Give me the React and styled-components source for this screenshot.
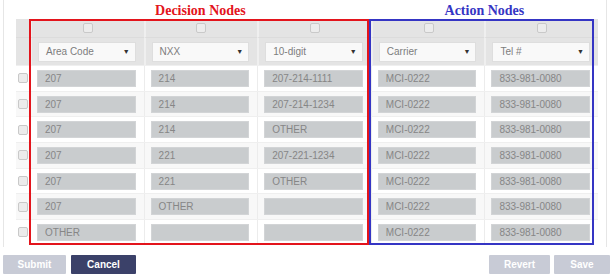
import React from "react";
import styled, { createGlobalStyle } from "styled-components";

const Global = createGlobalStyle`
  html, body { margin: 0; padding: 0; background: #fff; }
  body { font-family: "Liberation Sans", Arial, sans-serif; }
`;

const Card = styled.div`
  margin-left: 3px;
  width: 604px;
  box-sizing: border-box;
  border-left: 1px solid #e6e6e6;
  border-right: 1px solid #e6e6e6;
  padding: 0 8px 2px 12px;
`;

const Board = styled.div`
  position: relative;
  width: 582px;
`;

const Grid = styled.div`
  display: grid;
  grid-template-columns: 14px repeat(5, 1fr);
`;

const TitleRow = styled(Grid)`
  height: 19px;
  align-items: end;
`;

const Title = styled.div`
  grid-column: ${(p) => p.$span};
  text-align: center;
  font-family: "Liberation Serif", "Times New Roman", serif;
  font-weight: bold;
  font-size: 14px;
  line-height: 17px;
  color: ${(p) => p.$color};
`;

const HeadRow = styled(Grid)`
  background: #e4e4e4;
  height: ${(p) => p.$h}px;
`;

const HeadCell = styled.div`
  display: flex;
  align-items: center;
  justify-content: center;
  box-sizing: border-box;
  border-left: ${(p) => (p.$first ? "none" : "2px solid #efefef")};
  border-bottom: ${(p) => (p.$line ? "1px solid #dcdcdc" : "none")};
  padding: ${(p) => (p.$pad ? "0 8px 0 6px" : "0")};
`;

const Box = styled.span`
  display: block;
  width: 8px;
  height: 8px;
  border: 1px solid #c9c9c9;
  border-radius: 2px;
  background: #ececec;
`;

const Select = styled.div`
  display: flex;
  align-items: center;
  justify-content: space-between;
  width: 100%;
  height: 20px;
  box-sizing: border-box;
  background: #f9f9f9;
  border: 1px solid #dedede;
  padding: 0 5px 0 7px;
  font-size: 10px;
  color: #7d7d7d;
`;

const Caret = styled.span`
  font-size: 7px;
  color: #333;
`;

const DataRow = styled(Grid)`
  height: 25.7px;
  background: ${(p) => (p.$odd ? "#f8f8f8" : "#ffffff")};
  border-top: 1px solid #efefef;
  box-sizing: border-box;
`;

const CheckCell = styled.div`
  display: flex;
  align-items: center;
  justify-content: center;
`;

const DataCell = styled.div`
  display: flex;
  align-items: center;
  box-sizing: border-box;
  padding: 0 8px 0 6px;
  border-left: 1px solid #ececec;
`;

const Field = styled.div`
  width: 100%;
  height: 17px;
  box-sizing: border-box;
  background: #c9ccce;
  border: 1px solid #d2d4d6;
  padding: 0 7px;
  font-size: 10px;
  line-height: 15px;
  color: #868686;
  white-space: nowrap;
  overflow: hidden;
`;

const Frame = styled.div`
  position: absolute;
  top: 19px;
  left: ${(p) => p.$left}px;
  width: ${(p) => p.$width}px;
  height: 226px;
  box-sizing: border-box;
  border: 2px solid ${(p) => p.$color};
  pointer-events: none;
`;

const Actions = styled.div`
  display: flex;
  justify-content: space-between;
  margin-top: 8px;
  padding: 0 4px 0 3px;
`;

const Group = styled.div`
  display: flex;
  gap: ${(p) => p.$gap}px;
`;

const Button = styled.button`
  width: ${(p) => p.$w}px;
  height: 19px;
  border: none;
  border-radius: 1px;
  background: ${(p) => (p.$primary ? "#3b4169" : "#c8cbd6")};
  color: #fff;
  font-family: "Liberation Sans", Arial, sans-serif;
  font-size: 10px;
  font-weight: bold;
  padding: 0;
`;

const headers = ["Area Code", "NXX", "10-digit", "Carrier", "Tel #"];

const rows = [
  ["207", "214", "207-214-1111", "MCI-0222", "833-981-0080"],
  ["207", "214", "207-214-1234", "MCI-0222", "833-981-0080"],
  ["207", "214", "OTHER", "MCI-0222", "833-981-0080"],
  ["207", "221", "207-221-1234", "MCI-0222", "833-981-0080"],
  ["207", "221", "OTHER", "MCI-0222", "833-981-0080"],
  ["207", "OTHER", "", "MCI-0222", "833-981-0080"],
  ["OTHER", "", "", "MCI-0222", "833-981-0080"],
];

export default function App() {
  return (
    <>
      <Global />
      <Card>
        <Board>
          <TitleRow>
            <Title $span="2 / 5" $color="#e3141c">Decision Nodes</Title>
            <Title $span="5 / 7" $color="#3535c4">Action Nodes</Title>
          </TitleRow>
          <HeadRow $h={19}>
            <HeadCell $first $line />
            {headers.map((h) => (
              <HeadCell key={h} $line>
                <Box />
              </HeadCell>
            ))}
          </HeadRow>
          <HeadRow $h={27}>
            <HeadCell $first />
            {headers.map((h) => (
              <HeadCell key={h} $pad>
                <Select>
                  <span>{h}</span>
                  <Caret>▼</Caret>
                </Select>
              </HeadCell>
            ))}
          </HeadRow>
          {rows.map((r, i) => (
            <DataRow key={i} $odd={i % 2 === 1}>
              <CheckCell>
                <Box />
              </CheckCell>
              {r.map((v, j) => (
                <DataCell key={j}>
                  <Field>{v}</Field>
                </DataCell>
              ))}
            </DataRow>
          ))}
          <Frame $left={13} $width={340} $color="#e3141c" />
          <Frame $left={353} $width={225} $color="#3535c4" />
        </Board>
      </Card>
      <Actions>
        <Group $gap={5}>
          <Button $w={63}>Submit</Button>
          <Button $w={65} $primary>Cancel</Button>
        </Group>
        <Group $gap={4}>
          <Button $w={61}>Revert</Button>
          <Button $w={56}>Save</Button>
        </Group>
      </Actions>
    </>
  );
}
